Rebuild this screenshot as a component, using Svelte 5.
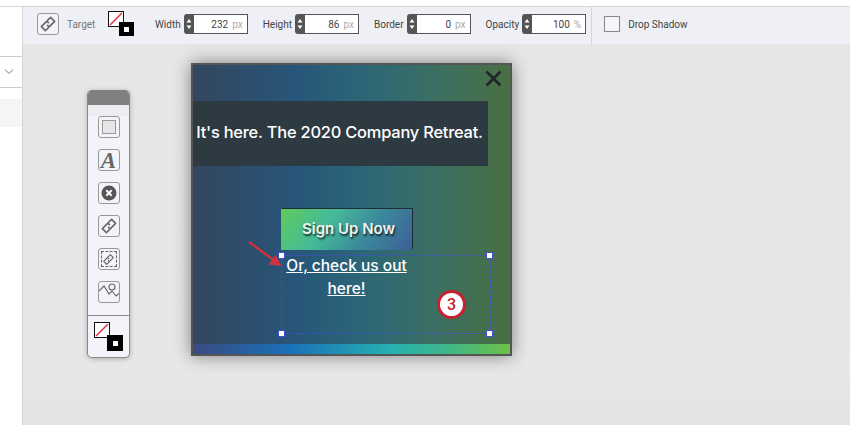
<script>
	const fields = [
		{ label: 'Width', value: 232, unit: 'px' },
		{ label: 'Height', value: 86, unit: 'px' },
		{ label: 'Border', value: 0, unit: 'px' },
		{ label: 'Opacity', value: 100, unit: '%' }
	]
</script>

{#snippet linkIcon(size)}
	<svg width={size} height={size} viewBox="0 0 22 22" fill="none" stroke="#666" stroke-width="1.900" stroke-linejoin="round">
		<g transform="rotate(-45 11 11)">
			<path d="M12.500 11V7.500H3V14.500H9" />
			<path d="M9.500 11v3.500H19V7.500H13" />
		</g>
	</svg>
{/snippet}

{#snippet swatch()}
	<div class="swatch">
		<svg class="swatch-fill" width="16" height="16" viewBox="0 0 16 16">
			<rect x="0.5" y="0.5" width="15" height="15" fill="#fff" stroke="#111" />
			<path d="M2 14 14 2" stroke="#e0374a" stroke-width="1.600" />
		</svg>
		<div class="swatch-stroke"><span></span></div>
	</div>
{/snippet}

<div class="page">
	<div class="topgap"></div>
	<div class="main">
		<aside class="side">
			<div class="side-blank"></div>
			<div class="side-select">
				<svg width="10" height="6" viewBox="0 0 10 6" fill="none" stroke="#777"><path d="M1 .5 5 4.500 9 .5" /></svg>
			</div>
			<div class="side-gap"></div>
			<div class="side-row"></div>
		</aside>

		<div class="work">
			<header class="toolbar">
				<button class="tool target">{@render linkIcon(18)}</button>
				<span class="target-label">Target</span>
				{@render swatch()}
				<div class="fields">
					{#each fields as f}
						<label class="field">
							<span>{f.label}</span>
							<div class="spin">
								<svg width="10" height="20" viewBox="0 0 10 20" fill="#fff"><path d="M5 5 7.500 8.500h-5zM5 15 2.500 11.500h5z" /></svg>
							</div>
							<div class="input"><b>{f.value}</b><i>{f.unit}</i></div>
						</label>
					{/each}
				</div>
				<div class="divider"></div>
				<div class="check"></div>
				<span class="check-label">Drop Shadow</span>
			</header>

			<main class="canvas">
				<div class="toolbox">
					<div class="toolbox-head"></div>
					<div class="toolbox-band"></div>
					<div class="tools">
						<button class="tool"><span class="square"></span></button>
						<button class="tool"><span class="letter">A</span></button>
						<button class="tool">
							<svg width="16" height="16" viewBox="0 0 16 16">
								<circle cx="8" cy="8" r="7.500" fill="#555" />
								<path d="M5.300 5.300 10.700 10.700M10.700 5.300 5.300 10.700" stroke="#fff" stroke-width="2" />
							</svg>
						</button>
						<button class="tool">{@render linkIcon(18)}</button>
						<button class="tool">
							<span class="dashed">{@render linkIcon(13)}</span>
						</button>
						<button class="tool">
							<svg width="20" height="20" viewBox="0 0 20 20" fill="none" stroke="#666" stroke-width="1.100">
								<circle cx="13" cy="5" r="3" />
								<path d="M0 9 5 4 10 12 13 9 17 14 20 11.500" />
							</svg>
						</button>
					</div>
					<div class="toolbox-foot">{@render swatch()}</div>
				</div>

				<div class="popup">
					<button class="close" aria-label="Close">
						<svg width="17" height="17" viewBox="0 0 17 17" stroke="#20262b" stroke-width="2.800"><path d="M1.500 1.500 15.500 15.500M15.500 1.500 1.500 15.500" /></svg>
					</button>
					<div class="headline">It's here. The 2020 Company Retreat.</div>
					<div class="cta">Sign Up Now</div>
					<a class="link" href="#top">Or, check us out here!</a>
					<div class="stripe"></div>

					<div class="selection">
						<span class="handle tl"></span>
						<span class="handle tr"></span>
						<span class="handle bl"></span>
						<span class="handle br"></span>
					</div>
					<div class="badge">3</div>
					<svg class="arrow" width="36" height="28" viewBox="0 0 36 28">
						<path d="M1 1 27 20" stroke="#d0323f" stroke-width="2.400" />
						<path d="M33.500 25 20.500 23.500 27.500 14z" fill="#d0323f" />
					</svg>
				</div>
			</main>
		</div>
	</div>
</div>

<style>
	:global(body) {
		margin: 0;
		background: #fff;
	}

	.page {
		width: 850px;
		height: 425px;
		overflow: hidden;
		display: flex;
		flex-direction: column;
		font-family: Roboto, "Liberation Sans", sans-serif;
		color: #444;
	}

	.topgap {
		height: 6px;
		flex: none;
		background: #fff;
		border-bottom: 1px solid #d4d5d8;
	}

	.main {
		flex: 1;
		display: flex;
		min-height: 0;
	}

	.side {
		width: 22px;
		flex: none;
		background: #fff;
		border-right: 1px solid #d4d5d8;
		display: flex;
		flex-direction: column;
	}

	.side-blank {
		height: 49px;
		border-bottom: 1px solid #ccc;
	}

	.side-select {
		height: 30px;
		border-bottom: 1px solid #ccc;
		display: flex;
		align-items: center;
		padding-left: 4px;
	}

	.side-gap {
		height: 11px;
	}

	.side-row {
		height: 28px;
		background: #f5f5f5;
	}

	.work {
		flex: 1;
		display: flex;
		flex-direction: column;
		min-width: 0;
	}

	.toolbar {
		height: 37px;
		flex: none;
		background: #eef0f5;
		display: flex;
		align-items: center;
		font-size: 10px;
		padding: 0 0 3px 14px;
		box-sizing: border-box;
	}

	.tool {
		width: 22px;
		height: 22px;
		padding: 0;
		box-sizing: border-box;
		background: #f2f4fa;
		border: 1px solid #999;
		border-radius: 3px;
		display: flex;
		align-items: center;
		justify-content: center;
	}

	.target-label {
		width: 41px;
		margin-left: 8px;
		color: #777;
	}

	.swatch {
		position: relative;
		width: 26px;
		height: 25px;
		flex: none;
		align-self: flex-start;
		margin-top: 4px;
	}

	.swatch-fill {
		display: block;
	}

	.swatch-stroke {
		position: absolute;
		right: 0;
		bottom: 0;
		width: 15px;
		height: 14px;
		background: #000;
		display: flex;
		align-items: center;
		justify-content: center;
	}

	.swatch-stroke span {
		width: 5px;
		height: 5px;
		background: #fff;
	}

	.fields {
		display: flex;
		gap: 15px;
		margin-left: 21px;
	}

	.field {
		display: flex;
		align-items: center;
	}

	.field > span {
		margin-right: 3px;
		color: #444;
	}

	.spin {
		width: 10px;
		height: 20px;
		background: #555;
		border-radius: 3px 0 0 3px;
	}

	.spin svg {
		display: block;
	}

	.input {
		width: 54px;
		height: 20px;
		box-sizing: border-box;
		background: #fff;
		border: 1px solid #555;
		border-left: 0;
		display: flex;
		align-items: center;
		justify-content: flex-end;
		gap: 4px;
		padding-right: 4px;
	}

	.input b {
		font-weight: 400;
		color: #444;
	}

	.input i {
		font-style: normal;
		color: #aaa;
	}

	.divider {
		width: 1px;
		align-self: stretch;
		margin: 0 12px -3px 5px;
		background: #d4d5d8;
	}

	.check {
		width: 16px;
		height: 16px;
		box-sizing: border-box;
		background: #f5f6f9;
		border: 1px solid #888;
	}

	.check-label {
		margin-left: 8px;
	}

	.canvas {
		flex: 1;
		position: relative;
		background: linear-gradient(180deg, #e6e6e6 0%, #e7e7e7 88%, #e3e3e3 100%);
	}

	.toolbox {
		position: absolute;
		left: 64px;
		top: 46px;
		width: 43px;
		height: 268px;
		box-sizing: border-box;
		background: #f2f4fa;
		border: 1px solid #8a8a8a;
		border-top: 0;
		border-radius: 5px;
		box-shadow: 0 1px 5px rgba(0, 0, 0, 0.25);
		display: flex;
		flex-direction: column;
		align-items: center;
		overflow: hidden;
	}

	.toolbox-head {
		width: 100%;
		height: 15px;
		flex: none;
		background: #808080;
	}

	.toolbox-band {
		width: 100%;
		height: 11px;
		flex: none;
		background: #ebedf1;
	}

	.tools {
		display: flex;
		flex-direction: column;
		gap: 11px;
	}

	.square {
		width: 14px;
		height: 14px;
		box-sizing: border-box;
		background: #e6e6e6;
		border: 1px solid #999;
	}

	.letter {
		font: italic 700 23px/1 "Liberation Serif", serif;
		color: #666;
	}

	.dashed {
		width: 16px;
		height: 16px;
		box-sizing: border-box;
		border: 1px dashed #666;
		display: flex;
		align-items: center;
		justify-content: center;
	}

	.toolbox-foot {
		width: 100%;
		margin-top: 12px;
		border-top: 1px solid #8a8a8a;
		padding: 6px 0 0 6px;
		box-sizing: border-box;
	}

	.toolbox-foot .swatch {
		width: 29px;
		height: 29px;
		margin-top: 0;
	}

	.toolbox-foot .swatch-stroke {
		width: 16px;
		height: 16px;
	}

	.popup {
		position: absolute;
		left: 168px;
		top: 19px;
		width: 321px;
		height: 293px;
		box-sizing: border-box;
		border: 2px solid #555;
		background: linear-gradient(90deg, #33465f 0%, #27567a 33%, #2c6776 55%, #3a6f64 75%, #4a7042 100%);
		box-shadow: 0 0 16px rgba(0, 0, 0, 0.45);
		display: flex;
		flex-direction: column;
		color: #fff;
	}

	.close {
		position: absolute;
		right: 8px;
		top: 5px;
		padding: 0;
		border: 0;
		background: none;
		line-height: 0;
	}

	.headline {
		width: 295px;
		height: 65px;
		box-sizing: border-box;
		padding: 0 2px 4px 0;
		margin-top: 36px;
		flex: none;
		background: #2e3a42;
		display: flex;
		align-items: center;
		justify-content: center;
		font-size: 16.400px;
		font-weight: 500;
		white-space: nowrap;
		font-family: Inter, Roboto, sans-serif;
		letter-spacing: -0.2px;
	}

	.cta {
		width: 131px;
		height: 41px;
		box-sizing: border-box;
		padding: 0 0 2px 4px;
		margin: 43px 0 0 88px;
		flex: none;
		background: linear-gradient(125deg, #5fcb5c 0%, #45ba9a 35%, #3b8a9a 65%, #3c5f98 100%);
		box-shadow: 1px -1px 0 #222c33;
		display: flex;
		align-items: center;
		justify-content: center;
		font-size: 15px;
		font-weight: 600;
		color: #eef2ee;
		text-shadow: 1px 2px 2px rgba(0, 0, 0, 0.75);
		font-family: Inter, Roboto, sans-serif;
	}

	.link {
		width: 131px;
		margin: 4px 0 0 88px;
		flex: none;
		text-align: center;
		font-size: 15.500px;
		font-weight: 500;
		line-height: 23px;
		color: #fff;
		font-family: Inter, Roboto, sans-serif;
	}

	.stripe {
		margin-top: auto;
		height: 10px;
		flex: none;
		background: linear-gradient(90deg, #3a4a80 0%, #1a70b8 30%, #25b0b0 62%, #3fb68c 80%, #6cc045 100%);
	}

	.selection {
		position: absolute;
		left: 88px;
		top: 190px;
		width: 208px;
		height: 77px;
		border: 1px dashed #3f50c8;
	}

	.handle {
		position: absolute;
		width: 5px;
		height: 5px;
		background: #fff;
		border: 1px solid #3f50c8;
	}

	.tl { left: -4px; top: -4px; }
	.tr { right: -3px; top: -4px; }
	.bl { left: -4px; bottom: -4px; }
	.br { right: -3px; bottom: -4px; }

	.badge {
		position: absolute;
		left: 244px;
		top: 225px;
		width: 29px;
		height: 29px;
		box-sizing: border-box;
		border-radius: 50%;
		background: #fff;
		border: 3px solid #c8202f;
		color: #c8202f;
		font-size: 16px;
		font-weight: 500;
		display: flex;
		align-items: center;
		justify-content: center;
	}

	.arrow {
		position: absolute;
		left: 55px;
		top: 176px;
	}
</style>
